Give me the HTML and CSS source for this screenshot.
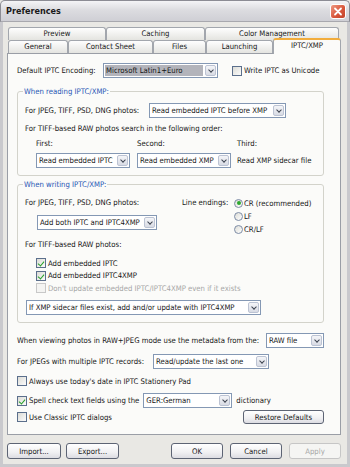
FILE: index.html
```html
<!DOCTYPE html>
<html lang="en">
<head>
  <meta charset="UTF-8" />
  <meta name="viewport" content="width=device-width, initial-scale=1.0"/>
  <title>Preferences</title>
  <link rel="stylesheet" href="styles.css">
</head>
<body>

<div class="window">
  <div class="titlebar">
    <span class="title">Preferences</span>
    <span class="close">
      <svg viewBox="0 0 16 15" width="16" height="15"><path d="M5 4.5 L11 10.5 M11 4.5 L5 10.5" stroke="#fff" stroke-width="1.8" stroke-linecap="round"/></svg>
    </span>
  </div>

  <div class="client">
    <!-- tab strip, two rows -->
    <div class="tabs">
      <div class="tab-row">
        <span class="tab t-preview">Preview</span>
        <span class="tab t-caching">Caching</span>
        <span class="tab t-color">Color Management</span>
      </div>
      <div class="tab-row">
        <span class="tab t-general">General</span>
        <span class="tab t-contact">Contact Sheet</span>
        <span class="tab t-files">Files</span>
        <span class="tab t-launch">Launching</span>
        <span class="tab t-iptc active">IPTC/XMP</span>
      </div>
    </div>

    <div class="panel">
      <div class="row enc-row">
        <span class="enc-label">Default IPTC Encoding:</span>
        <span class="select sel-enc"><span class="value hl">Microsoft Latin1+Euro</span><span class="arrow"></span></span>
        <span class="check unicode"><span class="box"></span>Write IPTC as Unicode</span>
      </div>

      <div class="group g-read">
        <div class="legend">When reading IPTC/XMP:</div>
        <div class="row read-row">
          <span class="read-label">For JPEG, TIFF, PSD, DNG photos:</span>
          <span class="select sel-read"><span class="value">Read embedded IPTC before XMP</span><span class="arrow"></span></span>
        </div>
        <div class="line order-title">For TIFF-based RAW photos search in the following order:</div>
        <div class="order">
          <span class="line">First:</span>
          <span class="line">Second:</span>
          <span class="line">Third:</span>
          <span class="select sel-order"><span class="value">Read embedded IPTC</span><span class="arrow"></span></span>
          <span class="select sel-order"><span class="value">Read embedded XMP</span><span class="arrow"></span></span>
          <span class="sidecar">Read XMP sidecar file</span>
        </div>
      </div>

      <div class="group g-write">
        <div class="legend">When writing IPTC/XMP:</div>
        <div class="write-top">
          <div class="write-left">
            <div class="line">For JPEG, TIFF, PSD, DNG photos:</div>
            <span class="select sel-both"><span class="value">Add both IPTC and IPTC4XMP</span><span class="arrow"></span></span>
          </div>
          <div class="endings">
            <span class="line endings-label">Line endings:</span>
            <div class="radios">
              <span class="radio-row"><span class="radio on"></span>CR (recommended)</span>
              <span class="radio-row"><span class="radio"></span>LF</span>
              <span class="radio-row"><span class="radio"></span>CR/LF</span>
            </div>
          </div>
        </div>
        <div class="line raw-title">For TIFF-based RAW photos:</div>
        <div class="raw-checks">
          <span class="check"><span class="box on"></span>Add embedded IPTC</span>
          <span class="check"><span class="box on"></span>Add embedded IPTC4XMP</span>
          <span class="check disabled"><span class="box"></span>Don't update embedded IPTC/IPTC4XMP even if it exists</span>
        </div>
        <span class="select sel-xmp"><span class="value">If XMP sidecar files exist, add and/or update with IPTC4XMP</span><span class="arrow"></span></span>
      </div>

      <div class="row view-row">
        <span>When viewing photos in RAW+JPEG mode use the metadata from the:</span>
        <span class="select sel-raw"><span class="value">RAW file</span><span class="arrow"></span></span>
      </div>
      <div class="row multi-row">
        <span class="multi-label">For JPEGs with multiple IPTC records:</span>
        <span class="select sel-multi"><span class="value">Read/update the last one</span><span class="arrow"></span></span>
      </div>
      <div class="check today"><span class="box"></span>Always use today's date in IPTC Stationery Pad</div>
      <div class="row spell-row">
        <span class="check"><span class="box on"></span>Spell check text fields using the</span>
        <span class="select sel-dict"><span class="value">GER:German</span><span class="arrow"></span></span>
        <span class="dict">dictionary</span>
      </div>
      <div class="row last-row">
        <span class="check"><span class="box"></span>Use Classic IPTC dialogs</span>
        <span class="button restore">Restore Defaults</span>
      </div>
    </div>

    <div class="footer">
      <span class="button b-import">Import...</span>
      <span class="button b-export">Export...</span>
      <span class="button b-ok">OK</span>
      <span class="button b-cancel">Cancel</span>
      <span class="button b-apply disabled">Apply</span>
    </div>
  </div>
</div>

</body>
</html>
```

FILE: styles.css
```css
* {
  box-sizing: border-box;
}
body {
  margin: 0;
  font-family: "DejaVu Sans Condensed", "DejaVu Sans", sans-serif;
  font-stretch: condensed;
  font-size: 7.7px;
  color: #151515;
  background: #e9e8e4;
}

.window {
  width: 350px;
  height: 467px;
  overflow: hidden;
}

/* title bar */
.titlebar {
  height: 22px;
  display: flex;
  align-items: center;
  justify-content: space-between;
  padding: 0 3px 0 5px;
  background: linear-gradient(#f4f4f6, #dcdce0 45%, #cfcfd5);
  border: 1px solid #8c8c94;
  border-bottom-color: #a8a8ae;
  border-radius: 5px 5px 0 0;
}
.title {
  font-weight: bold;
  font-size: 9px;
  color: #1a1a1a;
}
.close {
  width: 16px;
  height: 15px;
  display: flex;
  border: 1px solid #fff;
  border-radius: 3px;
  background: linear-gradient(135deg, #ee9a84, #d9573c 55%, #c2442b);
}
.close svg {
  margin: -1px;
}

.client {
  height: 445px;
  padding: 5px 6px 0 4px;
  border: 3px solid #c9c9cd;
  border-top: none;
  background: #e9e8e4;
}

/* tabs */
.tabs {
  padding-left: 1px;
}
.tab-row {
  display: flex;
  align-items: flex-start;
  height: 13px;
}
.tab {
  height: 13px;
  border: 1px solid #a2a6ad;
  border-bottom: none;
  border-radius: 3px 3px 0 0;
  background: linear-gradient(#fefefe, #e4e4e0);
  text-align: center;
  line-height: 12px;
  white-space: nowrap;
}
.t-preview { width: 98px; }
.t-caching { width: 99px; }
.t-color { width: 134px; }
.t-general { width: 60px; }
.t-contact { width: 85px; }
.t-files { width: 53px; }
.t-launch { width: 67px; }
.t-iptc { width: 68px; }
.tab.active {
  position: relative;
  z-index: 1;
  height: 16px;
  margin-top: -2px;
  border-top: 2px solid #f2ad3c;
  background: #fbfbf9;
  line-height: 11px;
}

.panel {
  height: 382px;
  padding: 9px 16px 0 9px;
  border: 1px solid #9a9ea6;
  background: #fbfbf9;
}

.row {
  display: flex;
  align-items: center;
  height: 15px;
  white-space: nowrap;
}
.line {
  height: 10px;
  line-height: 10px;
  white-space: nowrap;
}

/* combo boxes */
.select {
  display: flex;
  height: 15px;
  border: 1px solid #8498b4;
  background: #fff;
  flex-shrink: 0;
}
.select .value {
  flex: 1;
  padding-left: 2px;
  line-height: 13px;
  overflow: hidden;
  white-space: nowrap;
}
.select .value.hl {
  margin: 1px 1px 1px 1px;
  padding-left: 1px;
  line-height: 11px;
  background: #b3b4bb;
}
.arrow {
  width: 11px;
  margin: 1px;
  border: 1px solid #bcc3d3;
  border-radius: 2px;
  background: linear-gradient(#f4f5f8, #d8dbe4);
  display: flex;
  align-items: center;
  justify-content: center;
}
.arrow::after {
  content: "";
  width: 3px;
  height: 3px;
  margin-top: -2px;
  border-right: 1.5px solid #3d4350;
  border-bottom: 1.5px solid #3d4350;
  transform: rotate(45deg);
}

/* check boxes and radios */
.check {
  display: flex;
  align-items: center;
  white-space: nowrap;
}
.box {
  width: 10px;
  height: 10px;
  margin-right: 2px;
  border: 1px solid #5b6f8c;
  background: linear-gradient(135deg, #dcdcd6, #fbfbfb);
  display: flex;
  justify-content: center;
  flex-shrink: 0;
}
.box.on::after {
  content: "";
  width: 3px;
  height: 5px;
  margin-top: 1px;
  border-right: 1.6px solid #27a02a;
  border-bottom: 1.6px solid #27a02a;
  transform: rotate(40deg);
}
.check.disabled {
  color: #a6a6a6;
}
.check.disabled .box {
  border-color: #c8c8c8;
  background: #f4f4f2;
}
.radio {
  width: 9px;
  height: 9px;
  margin-right: 1px;
  border: 1px solid #7d8ca6;
  border-radius: 50%;
  background: linear-gradient(135deg, #dcdcd6, #fff);
  display: flex;
  align-items: center;
  justify-content: center;
}
.radio.on::after {
  content: "";
  width: 4px;
  height: 4px;
  border-radius: 50%;
  background: #2ca82e;
}

/* group boxes */
.group {
  border: 1px solid #d3d3cb;
  border-radius: 3px;
  padding: 0 7px 7px 7px;
}
.legend {
  width: max-content;
  height: 9px;
  margin: -5px 0 0 -2px;
  padding: 0 1px;
  line-height: 9px;
  color: #2656b4;
  background: #fbfbf9;
}

.enc-row {
  gap: 0;
}
.enc-label {
  width: 86px;
}
.sel-enc { width: 115px; }
.unicode {
  margin-left: 14px;
}

.g-read {
  margin-top: 13px;
}
.read-row {
  margin-top: 7px;
}
.read-label {
  width: 124px;
}
.sel-read { width: 137px; }
.order-title {
  margin-top: 5px;
  height: 11px;
  line-height: 11px;
}
.order {
  display: grid;
  grid-template-columns: 101px 100px auto;
  grid-template-rows: 10px 15px;
  row-gap: 4px;
  align-items: center;
  margin-top: 5px;
  padding-left: 11px;
}
.sel-order { width: 94px; }
.sidecar {
  white-space: nowrap;
}

.g-write {
  margin-top: 8px;
}
.write-top {
  display: flex;
  margin-top: 9px;
}
.write-left {
  width: 157px;
}
.sel-both {
  width: 120px;
  margin: 7px 0 0 12px;
}
.endings {
  display: flex;
}
.endings-label {
  width: 52px;
}
.radios {
  display: flex;
  flex-direction: column;
  gap: 3px;
}
.radio-row {
  display: flex;
  align-items: center;
  height: 10px;
}
.raw-title {
  margin-top: 6px;
}
.raw-checks {
  display: flex;
  flex-direction: column;
  margin-top: 7px;
  padding-left: 11px;
}
.raw-checks .check {
  height: 12.5px;
}
.sel-xmp {
  width: 235px;
  margin: 5.5px 0 0 1px;
}

.view-row {
  margin-top: 10px;
  justify-content: space-between;
}
.sel-raw { width: 58px; }
.multi-row {
  margin-top: 6px;
}
.multi-label {
  width: 136px;
}
.sel-multi { width: 116px; }
.today {
  height: 10px;
  margin-top: 7px;
}
.spell-row {
  margin-top: 7px;
}
.sel-dict {
  width: 89px;
  margin-left: 4px;
}
.dict {
  margin-left: 4px;
}
.last-row {
  height: 14px;
  margin-top: 2px;
  justify-content: space-between;
}

/* push buttons */
.button {
  display: flex;
  align-items: center;
  justify-content: center;
  height: 15px;
  border: 1px solid #5d6474;
  border-radius: 3px;
  background: linear-gradient(#ffffff, #f0f0f2 60%, #dcdce2);
  white-space: nowrap;
}
.restore {
  width: 81px;
  height: 14px;
}
.button.disabled {
  color: #a8a8a8;
  border-color: #c6c6c6;
  background: #f5f5f3;
}

.footer {
  display: flex;
  margin-top: 8px;
}
.footer .button {
  height: 16px;
}
.b-import { width: 54px; }
.b-export { width: 53px; margin-left: 5px; }
.b-ok { width: 52px; margin-left: auto; }
.b-cancel { width: 52px; margin-left: 7px; }
.b-apply { width: 52px; margin-left: 7px; }
```
